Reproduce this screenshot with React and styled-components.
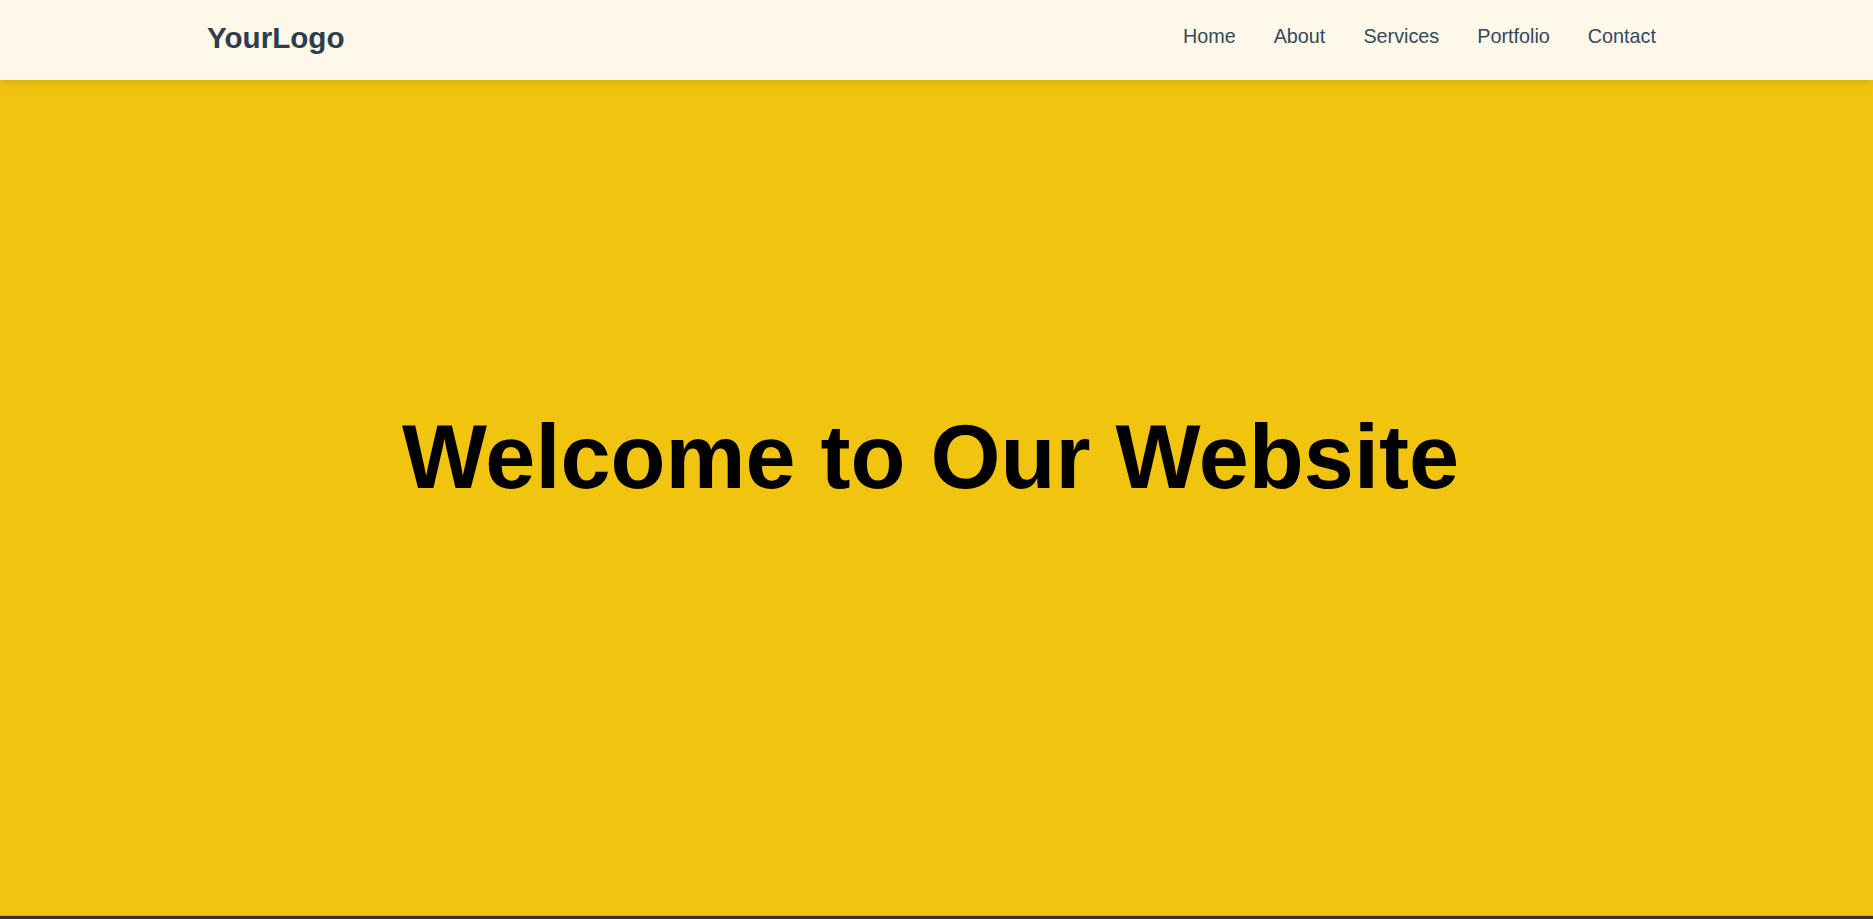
import React from 'react';
import styled, { createGlobalStyle } from 'styled-components';

const GlobalStyle = createGlobalStyle`
  * { box-sizing: border-box; }
  body {
    margin: 0;
    font-family: "Liberation Sans", Arial, sans-serif;
    background: #333333;
  }
`;

const Header = styled.header`
  position: relative;
  z-index: 2;
  height: 80px;
  background: #fef8e8;
  box-shadow: 0 2px 10px rgba(0, 0, 0, 0.12);
`;

const HeaderInner = styled.div`
  max-width: 1459px;
  height: 100%;
  margin: 0 auto;
  padding-bottom: 7px;
  display: flex;
  align-items: center;
  justify-content: space-between;
`;

const Logo = styled.div`
  font-size: 29.6px;
  font-weight: 700;
  color: #2c3e50;
  padding-top: 2px;
`;

const Nav = styled.nav`
  display: flex;
  gap: 38px;
  padding-right: 10px;
`;

const NavLink = styled.a`
  font-size: 19.8px;
  color: #34495e;
  text-decoration: none;
  cursor: pointer;
`;

const Hero = styled.section`
  height: 836px;
  background: #f1c40f;
  display: flex;
  align-items: center;
  justify-content: center;
  padding: 0 12px 80px 0;
  border-bottom: 1px solid #d9ae0c;
`;

const Title = styled.h1`
  margin: 0;
  font-size: 90px;
  font-weight: 700;
  color: #000;
`;

const Footer = styled.footer`
  height: 3px;
  background: #333333;
`;

const links = ['Home', 'About', 'Services', 'Portfolio', 'Contact'];

export default function App() {
  return (
    <>
      <GlobalStyle />
      <Header>
        <HeaderInner>
          <Logo>YourLogo</Logo>
          <Nav>
            {links.map((l) => (
              <NavLink key={l}>{l}</NavLink>
            ))}
          </Nav>
        </HeaderInner>
      </Header>
      <Hero>
        <Title>Welcome to Our Website</Title>
      </Hero>
      <Footer />
    </>
  );
}
